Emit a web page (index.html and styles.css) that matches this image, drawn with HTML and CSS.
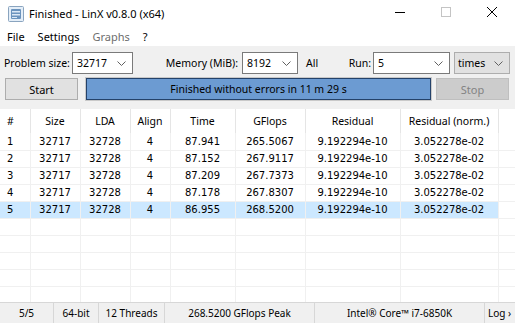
FILE: index.html
```html
<!DOCTYPE html>
<html lang="en">

<head>
    <meta charset="UTF-8">
    <meta name="viewport" content="width=device-width, initial-scale=1.0">
    <title>Finished - LinX v0.8.0 (x64)</title>
    <link rel="stylesheet" href="styles.css">
</head>

<body>
    <div class="window">
        <div class="titlebar">
            <svg class="app-icon" width="16" height="16" viewBox="0 0 16 16">
                <rect x="0.5" y="0.5" width="15" height="15" rx="1" fill="#e4eef8" stroke="#8aa4bf" />
                <rect x="3" y="3" width="10" height="10" rx="1" fill="#6b93bd" />
                <rect x="4" y="5" width="8" height="1.5" fill="#dbe8f5" />
                <rect x="4" y="8" width="8" height="1.5" fill="#dbe8f5" />
                <rect x="4" y="11" width="5" height="1" fill="#dbe8f5" />
            </svg>
            <span class="title">Finished - LinX v0.8.0 (x64)</span>
            <div class="controls">
                <span class="ctl">
                    <svg width="10" height="10" viewBox="0 0 10 10"><line x1="0" y1="5.5" x2="10" y2="5.5" stroke="#000" /></svg>
                </span>
                <span class="ctl">
                    <svg width="10" height="10" viewBox="0 0 10 10"><rect x="0.5" y="0.5" width="9" height="9" fill="none" stroke="#c4c4c4" /></svg>
                </span>
                <span class="ctl">
                    <svg width="10" height="10" viewBox="0 0 10 10"><path d="M0 0 L10 10 M10 0 L0 10" stroke="#000" stroke-width="1" /></svg>
                </span>
            </div>
        </div>

        <div class="menubar">
            <span>File</span>
            <span>Settings</span>
            <span class="disabled">Graphs</span>
            <span>?</span>
        </div>

        <div class="main">
            <div class="params">
                <label class="lbl lbl-size">Problem size:</label>
                <div class="combo combo-size">
                    <span>32717</span>
                    <svg class="chevron" width="9" height="5" viewBox="0 0 9 5"><polyline points="0.5,0.5 4.5,4.5 8.5,0.5" /></svg>
                </div>
                <label class="lbl lbl-mem">Memory (MiB):</label>
                <div class="combo combo-mem">
                    <span>8192</span>
                    <svg class="chevron" width="9" height="5" viewBox="0 0 9 5"><polyline points="0.5,0.5 4.5,4.5 8.5,0.5" /></svg>
                </div>
                <span class="all">All</span>
                <label class="lbl lbl-run">Run:</label>
                <div class="combo combo-run">
                    <span>5</span>
                    <svg class="chevron" width="9" height="5" viewBox="0 0 9 5"><polyline points="0.5,0.5 4.5,4.5 8.5,0.5" /></svg>
                </div>
                <div class="combo combo-unit">
                    <span>times</span>
                    <svg class="chevron" width="9" height="5" viewBox="0 0 9 5"><polyline points="0.5,0.5 4.5,4.5 8.5,0.5" /></svg>
                </div>
            </div>

            <div class="actions">
                <div class="btn">Start</div>
                <div class="progress">Finished without errors in 11 m 29 s</div>
                <div class="btn btn-disabled">Stop</div>
            </div>

            <div class="results">
                <table>
                    <colgroup>
                        <col class="c-num">
                        <col class="c-size">
                        <col class="c-lda">
                        <col class="c-align">
                        <col class="c-time">
                        <col class="c-gflops">
                        <col class="c-res">
                        <col class="c-norm">
                        <col>
                    </colgroup>
                    <thead>
                        <tr>
                            <th class="left">#</th>
                            <th>Size</th>
                            <th>LDA</th>
                            <th>Align</th>
                            <th>Time</th>
                            <th>GFlops</th>
                            <th>Residual</th>
                            <th>Residual (norm.)</th>
                            <th class="filler"></th>
                        </tr>
                    </thead>
                    <tbody>
                        <tr>
                            <td class="left">1</td><td>32717</td><td>32728</td><td>4</td><td>87.941</td><td>265.5067</td><td>9.192294e-10</td><td>3.052278e-02</td><td></td>
                        </tr>
                        <tr>
                            <td class="left">2</td><td>32717</td><td>32728</td><td>4</td><td>87.152</td><td>267.9117</td><td>9.192294e-10</td><td>3.052278e-02</td><td></td>
                        </tr>
                        <tr>
                            <td class="left">3</td><td>32717</td><td>32728</td><td>4</td><td>87.209</td><td>267.7373</td><td>9.192294e-10</td><td>3.052278e-02</td><td></td>
                        </tr>
                        <tr>
                            <td class="left">4</td><td>32717</td><td>32728</td><td>4</td><td>87.178</td><td>267.8307</td><td>9.192294e-10</td><td>3.052278e-02</td><td></td>
                        </tr>
                        <tr class="selected">
                            <td class="left">5</td><td>32717</td><td>32728</td><td>4</td><td>86.955</td><td>268.5200</td><td>9.192294e-10</td><td>3.052278e-02</td><td></td>
                        </tr>
                        <tr class="empty"><td></td><td></td><td></td><td></td><td></td><td></td><td></td><td></td><td></td></tr>
                        <tr class="empty"><td></td><td></td><td></td><td></td><td></td><td></td><td></td><td></td><td></td></tr>
                        <tr class="empty"><td></td><td></td><td></td><td></td><td></td><td></td><td></td><td></td><td></td></tr>
                        <tr class="empty"><td></td><td></td><td></td><td></td><td></td><td></td><td></td><td></td><td></td></tr>
                        <tr class="empty"><td></td><td></td><td></td><td></td><td></td><td></td><td></td><td></td><td></td></tr>
                    </tbody>
                </table>
            </div>
        </div>

        <div class="statusbar">
            <span class="st-runs">5/5</span>
            <span class="st-bits">64-bit</span>
            <span class="st-threads">12 Threads</span>
            <span class="st-peak">268.5200 GFlops Peak</span>
            <span class="st-cpu">Intel® Core™ i7-6850K</span>
            <span class="st-log">Log ›</span>
        </div>
    </div>
</body>

</html>
```

FILE: styles.css
```css
* {
    padding: 0;
    margin: 0;
    box-sizing: border-box;
}

body {
    width: 515px;
    height: 323px;
    overflow: hidden;
    background-color: #fff;
    color: #000;
    font-family: "Noto Sans", sans-serif;
}

.window {
    display: flex;
    flex-direction: column;
    height: 323px;
}

/* 标题栏 */
.titlebar {
    display: flex;
    align-items: center;
    height: 27px;
    background-color: #fff;
}

.app-icon {
    margin: 0 5px 0 8px;
}

.title {
    font-size: 11px;
}

.controls {
    display: flex;
    align-self: flex-start;
    height: 24px;
    margin-left: auto;
}

.ctl {
    display: flex;
    align-items: center;
    justify-content: center;
    width: 46px;
}

/* 菜单 */
.menubar {
    display: flex;
    align-items: center;
    height: 19px;
    padding-left: 0.5px;
    font-size: 11px;
}

.menubar span {
    padding: 0 6.5px;
}

.menubar .disabled {
    color: #6d6d6d;
}

.main {
    flex: 1;
    display: flex;
    flex-direction: column;
    min-height: 0;
    background-color: #f0f0f0;
}

/* 参数行 */
.params {
    display: flex;
    align-items: center;
    height: 22px;
    margin-top: 6px;
    padding-left: 4px;
    font-size: 10.5px;
    white-space: nowrap;
}

.lbl {
    flex-shrink: 0;
    margin-right: 4px;
}

.lbl-size {
    width: 64px;
}

.lbl-mem {
    width: 105px;
    text-align: right;
}

.all {
    width: 40px;
    margin-left: 8px;
}

.lbl-run {
    width: 25px;
    margin-right: 2px;
    text-align: right;
}

.combo {
    flex-shrink: 0;
    display: flex;
    align-items: center;
    justify-content: space-between;
    height: 22px;
    padding: 0 6px 0 4px;
    border: 1px solid #7a7a7a;
    background-color: #fff;
}

.chevron {
    fill: none;
    stroke: #606060;
    stroke-width: 1;
}

.combo-size {
    width: 61px;
}

.combo-mem {
    width: 56px;
}

.combo-run {
    width: 77px;
}

.combo-unit {
    width: 56px;
    margin-left: 4px;
    padding-left: 3px;
    border-color: #adadad;
    background-color: #e1e1e1;
}

/* 按钮和进度条 */
.actions {
    display: flex;
    height: 22px;
    margin-top: 4px;
    padding: 0 6px 0 5px;
    font-size: 11px;
}

.btn {
    display: flex;
    align-items: center;
    justify-content: center;
    width: 73px;
    border: 1px solid #adadad;
    background-color: #e1e1e1;
}

.btn-disabled {
    border-color: #bfbfbf;
    background-color: #cccccc;
    color: #838383;
}

.progress {
    flex: 1;
    display: flex;
    align-items: center;
    justify-content: center;
    margin: 0 5px 0 8px;
    border: 1px solid #24426a;
    box-shadow: 0 0 0 1px #c9c9c9;
    background-color: #6c9bd2;
    font-size: 10.5px;
}

/* 结果表格 */
.results {
    flex: 1;
    min-height: 0;
    margin-top: 9px;
    overflow: hidden;
    background-color: #fff;
}

table {
    width: 100%;
    table-layout: fixed;
    border-collapse: collapse;
}

.c-num {
    width: 30px;
}

.c-size {
    width: 50px;
}

.c-lda {
    width: 50px;
}

.c-align {
    width: 40px;
}

.c-time {
    width: 65px;
}

.c-gflops {
    width: 70px;
}

.c-res {
    width: 95px;
}

.c-norm {
    width: 98px;
}

th {
    height: 24px;
    border-right: 1px solid #e5e5e5;
    font-weight: normal;
    font-size: 10.5px;
    text-align: center;
}

th.filler {
    border-right: none;
}

td {
    height: 17px;
    border-right: 1px solid #f0f0f0;
    border-bottom: 1px solid #f0f0f0;
    font-family: "DejaVu Sans", sans-serif;
    font-size: 10px;
    text-align: center;
    white-space: nowrap;
}

td:last-child {
    border-right: none;
}

th.left,
td.left {
    padding-left: 7px;
    text-align: left;
}

.selected td {
    background-color: #cce8ff;
}

.selected td:last-child {
    background-color: #fff;
}

/* 状态栏 */
.statusbar {
    display: flex;
    height: 21px;
    border-top: 1px solid #d7d7d7;
    background-color: #f0f0f0;
    font-size: 10px;
}

.statusbar span {
    display: flex;
    align-items: center;
    justify-content: center;
    border-right: 1px solid #d7d7d7;
}

.st-runs {
    width: 54px;
}

.st-bits {
    width: 45px;
}

.st-threads {
    width: 66px;
}

.st-peak {
    width: 150px;
}

.st-cpu {
    width: 170px;
}

.statusbar .st-log {
    flex: 1;
    justify-content: flex-start;
    padding-left: 3px;
    border-right: none;
}
```
